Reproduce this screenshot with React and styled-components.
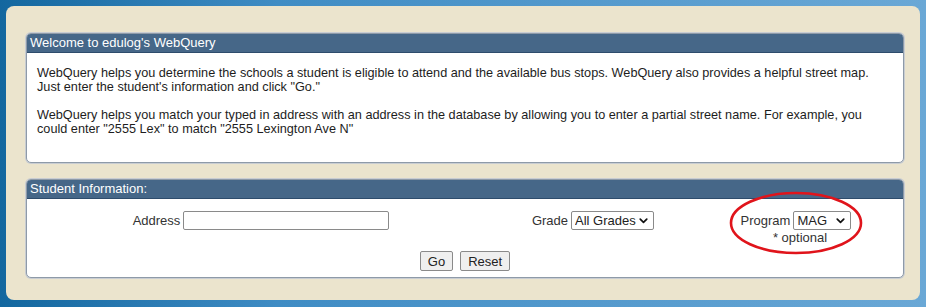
import React from "react";
import styled, { createGlobalStyle } from "styled-components";

const GlobalStyle = createGlobalStyle`
  html, body {
    margin: 0;
    padding: 0;
    background: #2f7fb8;
  }
  body {
    font-family: "Liberation Sans", Arial, sans-serif;
    font-size: 13px;
    color: #222;
  }
`;

function Dropdown({ width, value, label }) {
  return (
    <SelectWrap>
      <Select defaultValue={value} $w={width}>
        <option value={value}>{label}</option>
      </Select>
      <Chevron viewBox="0 0 10 7">
        <path d="M1.2 1.3 L5 5 L8.8 1.3" fill="none" stroke="#111" strokeWidth="2" strokeLinecap="round" strokeLinejoin="round" />
      </Chevron>
    </SelectWrap>
  );
}

export default function App() {
  return (
    <>
      <GlobalStyle />
      <Frame>
        <Sheet>
          <Panel>
            <PanelHeader>Welcome to edulog's WebQuery</PanelHeader>
            <PanelBody>
              <Para>
                WebQuery helps you determine the schools a student is eligible to attend and the available bus stops. WebQuery also provides a helpful street map.
                <br />
                Just enter the student's information and click "Go."
              </Para>
              <Para>
                WebQuery helps you match your typed in address with an address in the database by allowing you to enter a partial street name. For example, you could enter "2555 Lex" to match "2555 Lexington Ave N"
              </Para>
            </PanelBody>
          </Panel>

          <Panel>
            <PanelHeader>Student Information:</PanelHeader>
            <FormBody>
              <FieldRow>
                <Cell>
                  <Label>Address</Label>
                  <TextInput type="text" />
                </Cell>
                <Cell>
                  <Label>Grade</Label>
                  <Dropdown width={83} value="all" label="All Grades" />
                </Cell>
                <ProgramCell>
                  <Cell>
                    <Label>Program</Label>
                    <Dropdown width={58} value="mag" label="MAG" />
                  </Cell>
                  <Hint>* optional</Hint>
                  <Circle viewBox="0 0 134 64">
                    <ellipse cx="67" cy="32" rx="65" ry="30" fill="none" stroke="#e0141b" strokeWidth="2.6" />
                  </Circle>
                </ProgramCell>
              </FieldRow>
              <Buttons>
                <Button>Go</Button>
                <Button>Reset</Button>
              </Buttons>
            </FormBody>
          </Panel>
        </Sheet>
      </Frame>
    </>
  );
}

const Frame = styled.div`
  width: 926px;
  height: 307px;
  box-sizing: border-box;
  padding: 6px 6px 7px 6px;
  background: linear-gradient(90deg, #13679f 0%, #3f8cc4 30%, #6aa8d6 100%);
`;

const Sheet = styled.div`
  height: 100%;
  box-sizing: border-box;
  background: #ebe4cd;
  border-radius: 8px;
  padding: 27px 16px 0 20px;
  display: flex;
  flex-direction: column;
  gap: 16px;
`;

const Panel = styled.div`
  border: 1px solid #8e9aa8;
  border-radius: 5px;
  background: #fff;
  overflow: hidden;
  box-shadow: 0 0 0 1px #c9cdd2;
`;

const PanelHeader = styled.div`
  background: #466788;
  color: #fff;
  height: 18px;
  line-height: 18px;
  padding: 0 3px;
  font-size: 13px;
  border-bottom: 1px solid #2e4c6c;
`;

const PanelBody = styled.div`
  padding: 13px 10px 16px 10px;
  display: flex;
  flex-direction: column;
  gap: 14px;
  height: 80px;
`;

const Para = styled.p`
  margin: 0;
  line-height: 14px;
  font-size: 12.7px;
  color: #1d1d1d;
`;

const FormBody = styled.div`
  padding: 10px 0 7px 0;
  height: 61px;
`;

const FieldRow = styled.div`
  display: grid;
  grid-template-columns: 468px 196px 1fr;
`;

const Cell = styled.div`
  display: flex;
  align-items: center;
  justify-content: center;
  height: 22px;
`;

const ProgramCell = styled.div`
  position: relative;
  display: flex;
  flex-direction: column;
  align-items: center;
  margin-left: -2px;
`;

const Label = styled.span`
  color: #333;
  margin-right: 3px;
  font-size: 13px;
`;

const TextInput = styled.input`
  width: 200px;
  height: 15px;
  border: 1px solid #8a8a8a;
  border-radius: 2px;
  padding: 1px 2px;
  font-family: inherit;
  font-size: 13px;
`;

const SelectWrap = styled.span`
  position: relative;
  display: inline-flex;
`;

const Select = styled.select`
  appearance: none;
  -webkit-appearance: none;
  width: ${(p) => `${p.$w}px`};
  height: 19px;
  box-sizing: border-box;
  border: 1px solid #8a8a8a;
  border-radius: 2px;
  font-family: inherit;
  font-size: 13px;
  color: #222;
  background: #fff;
  padding: 0 16px 0 3px;
`;

const Chevron = styled.svg`
  position: absolute;
  right: 6px;
  top: 7px;
  width: 9px;
  height: 6px;
  pointer-events: none;
`;

const Hint = styled.div`
  color: #333;
  font-size: 13px;
  line-height: 14px;
  margin-left: 8px;
`;

const Circle = styled.svg`
  position: absolute;
  left: 40px;
  top: -18px;
  width: 134px;
  height: 64px;
  pointer-events: none;
`;

const Buttons = styled.div`
  display: flex;
  justify-content: center;
  gap: 7px;
  margin-top: 6px;
`;

const Button = styled.button`
  font-family: inherit;
  font-size: 13px;
  color: #222;
  height: 20px;
  padding: 0 7px;
  background: #efefef;
  border: 1px solid #8a8a8a;
  border-radius: 2px;
`;
